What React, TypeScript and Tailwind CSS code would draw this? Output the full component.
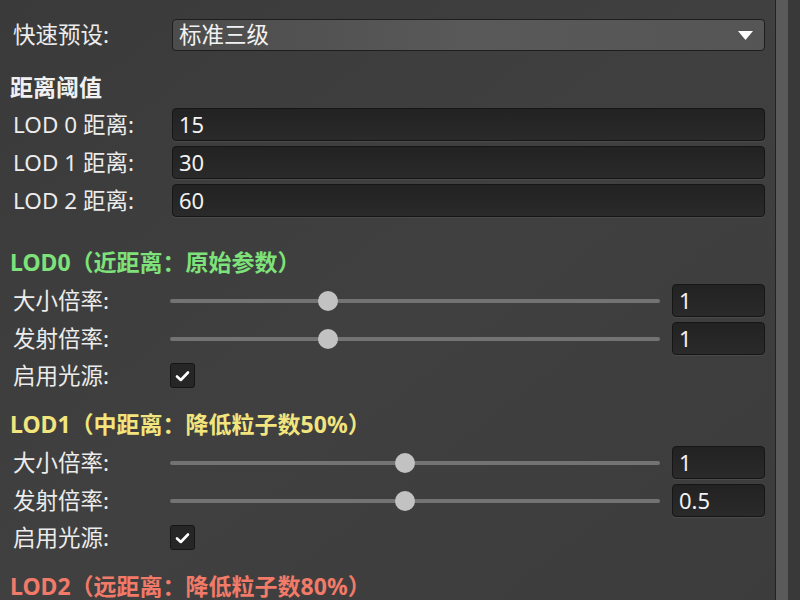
import React from "react";

const font = { fontFamily: '"Noto Sans", "Noto Sans CJK SC", sans-serif' };

function Label({ children }: { children: React.ReactNode }) {
	return <div className="w-[162px] shrink-0 pl-[3px] text-[22.5px] text-[#ececec]">{children}</div>;
}

function Field({ value }: { value: string }) {
	return (
		<div className="flex h-[33px] flex-1 items-center rounded-[4px] border border-[#161616] bg-gradient-to-b from-[#222222] to-[#2a2a2a] pl-[6px] text-[22px] text-[#f2f2f2] shadow-[0_1px_0_#4a4a4a]">
			{value}
		</div>
	);
}

function Slider({ pos, value }: { pos: number; value: string }) {
	return (
		<div className="-ml-[2px] flex flex-1 items-center gap-[12px]">
			<div className="relative h-[20px] flex-1">
				<div className="absolute left-0 right-0 top-[8px] h-[4px] rounded-full bg-[#737373]" />
				<div
					className="absolute top-0 h-[20px] w-[20px] -translate-x-1/2 rounded-full bg-[#c2c2c2]"
					style={{ left: `${pos * 100}%` }}
				/>
			</div>
			<div className="w-[93px]">
				<Field value={value} />
			</div>
		</div>
	);
}

function Check() {
	return (
		<div className="-ml-[2px] flex h-[25px] w-[25px] items-center justify-center rounded-[3px] border border-[#151515] bg-[#262626]">
			<svg width="15" height="12" viewBox="0 0 15 12" fill="none">
				<path d="M2 6.5 L5.8 10 L13 2.5" stroke="#ffffff" strokeWidth="2.6" strokeLinecap="round" strokeLinejoin="round" />
			</svg>
		</div>
	);
}

function Title({ color, children, className = "" }: { color: string; children: React.ReactNode; className?: string }) {
	return (
		<div className={`flex h-[30px] items-center text-[23px] font-bold ${color} ${className}`}>{children}</div>
	);
}

function LodBlock({ title, color, size, emit, sizePos, emitPos }: { title: string; color: string; size: string; emit: string; sizePos: number; emitPos: number }) {
	return (
		<>
			<Title color={color} className="mt-[17px]">{title}</Title>
			<div className="mt-[7px] flex h-[33px] items-center">
				<Label>大小倍率:</Label>
				<Slider pos={sizePos} value={size} />
			</div>
			<div className="mt-[5px] flex h-[33px] items-center">
				<Label>发射倍率:</Label>
				<Slider pos={emitPos} value={emit} />
			</div>
			<div className="mt-[4px] flex h-[33px] items-center">
				<Label>启用光源:</Label>
				<Check />
			</div>
		</>
	);
}

export default function App() {
	return (
		<div className="flex h-[600px] w-[800px] overflow-hidden bg-[#3b3b3b]" style={font}>
			<div className="flex w-[775px] flex-col bg-gradient-to-br from-[#3a3a3a] via-[#404040] to-[#3c3c3c] pl-[10px] pr-[10px] pt-[19px]">
				<div className="flex h-[32px] items-center">
					<Label>快速预设:</Label>
					<div className="flex h-[32px] flex-1 items-center justify-between rounded-[4px] border border-[#1e1e1e] bg-gradient-to-r from-[#4c4c4c] via-[#595959] to-[#555555] pl-[6px] pr-[11px] text-[22.5px] text-[#f2f2f2]">
						<span>标准三级</span>
						<svg width="15" height="9" viewBox="0 0 15 9">
							<path d="M0 0 H15 L7.5 9 Z" fill="#ffffff" />
						</svg>
					</div>
				</div>

				<Title color="text-[#f0f0f0]" className="mt-[21px]">距离阈值</Title>
				<div className="mt-[6px] flex h-[33px] items-center">
					<Label>LOD 0 距离:</Label>
					<Field value="15" />
				</div>
				<div className="mt-[5px] flex h-[33px] items-center">
					<Label>LOD 1 距离:</Label>
					<Field value="30" />
				</div>
				<div className="mt-[5px] flex h-[33px] items-center">
					<Label>LOD 2 距离:</Label>
					<Field value="60" />
				</div>

				<div className="mt-[13px]" />
				<LodBlock title="LOD0（近距离：原始参数）" color="text-[#7ee27a]" size="1" emit="1" sizePos={0.322} emitPos={0.322} />
				<LodBlock title="LOD1（中距离：降低粒子数50%）" color="text-[#f2e57e]" size="1" emit="0.5" sizePos={0.479} emitPos={0.479} />
				<Title color="text-[#f27a68]" className="mt-[17px]">LOD2（远距离：降低粒子数80%）</Title>
			</div>
			<div className="w-px bg-[#232323]" />
			<div className="w-[12px] bg-[#5a5a5a]" />
			<div className="flex-1 bg-[#393939]" />
		</div>
	);
}
